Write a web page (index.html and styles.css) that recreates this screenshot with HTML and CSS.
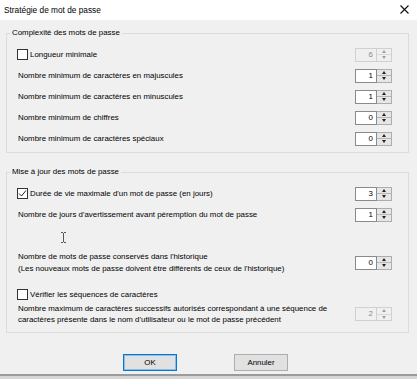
FILE: index.html
```html
<!DOCTYPE html>
<html lang="fr">
<head>
    <meta charset="UTF-8">
    <title>Stratégie de mot de passe</title>
    <link rel="stylesheet" href="styles.css">
</head>
<body>
    <div class="window">
        <div class="titlebar">
            <span class="title">Stratégie de mot de passe</span>
            <svg class="close" width="9" height="9" viewBox="0 0 9 9"><path d="M0.5 0.5 L8.5 8.5 M8.5 0.5 L0.5 8.5" stroke="#111" stroke-width="1.1" fill="none"/></svg>
        </div>

        <div class="content">
            <fieldset class="group">
                <legend>Complexité des mots de passe</legend>
                <div class="row">
                    <label class="check"><span class="box"></span>Longueur minimale</label>
                    <div class="spin disabled"><span class="spin-val">6</span><span class="spin-btns"><span class="up"></span><span class="down"></span></span></div>
                </div>
                <div class="row">
                    <span class="label">Nombre minimum de caractères en majuscules</span>
                    <div class="spin"><span class="spin-val">1</span><span class="spin-btns"><span class="up"></span><span class="down"></span></span></div>
                </div>
                <div class="row">
                    <span class="label">Nombre minimum de caractères en minuscules</span>
                    <div class="spin"><span class="spin-val">1</span><span class="spin-btns"><span class="up"></span><span class="down"></span></span></div>
                </div>
                <div class="row">
                    <span class="label">Nombre minimum de chiffres</span>
                    <div class="spin"><span class="spin-val">0</span><span class="spin-btns"><span class="up"></span><span class="down"></span></span></div>
                </div>
                <div class="row">
                    <span class="label">Nombre minimum de caractères spéciaux</span>
                    <div class="spin"><span class="spin-val">0</span><span class="spin-btns"><span class="up"></span><span class="down"></span></span></div>
                </div>
            </fieldset>

            <fieldset class="group group-update">
                <legend>Mise à jour des mots de passe</legend>
                <div class="row">
                    <label class="check"><span class="box checked"><svg width="9" height="9" viewBox="0 0 9 9"><path d="M1 4.5 L3.5 7 L8 1.5" stroke="#222" stroke-width="1" fill="none"/></svg></span>Durée de vie maximale d'un mot de passe (en jours)</label>
                    <div class="spin"><span class="spin-val">3</span><span class="spin-btns"><span class="up"></span><span class="down"></span></span></div>
                </div>
                <div class="row">
                    <span class="label">Nombre de jours d'avertissement avant péremption du mot de passe</span>
                    <div class="spin"><span class="spin-val">1</span><span class="spin-btns"><span class="up"></span><span class="down"></span></span></div>
                </div>
                <div class="row multi history">
                    <span class="label">Nombre de mots de passe conservés dans l'historique<br>(Les nouveaux mots de passe doivent être différents de ceux de l'historique)</span>
                    <div class="spin"><span class="spin-val">0</span><span class="spin-btns"><span class="up"></span><span class="down"></span></span></div>
                </div>
                <div class="row check-row">
                    <label class="check"><span class="box"></span>Vérifier les séquences de caractères</label>
                </div>
                <div class="row multi">
                    <span class="label">Nombre maximum de caractères successifs autorisés correspondant à une séquence de<br>caractères présente dans le nom d'utilisateur ou le mot de passe précédent</span>
                    <div class="spin disabled"><span class="spin-val">2</span><span class="spin-btns"><span class="up"></span><span class="down"></span></span></div>
                </div>
                <svg class="ibeam" width="5" height="11" viewBox="0 0 5 11"><path d="M0 0.5 H2 M3 0.5 H5 M2.5 1 V10 M0 10.5 H2 M3 10.5 H5" stroke="#555" stroke-width="1" fill="none"/></svg>
            </fieldset>

            <div class="buttons">
                <button class="btn btn-default">OK</button>
                <button class="btn">Annuler</button>
            </div>
        </div>

        <div class="bottom-edge"></div>
    </div>
</body>
</html>
```

FILE: styles.css
```css
* {
    box-sizing: border-box;
}
body {
    margin: 0;
    font-family: "Liberation Sans", Arial, sans-serif;
    font-size: 7.9px;
    color: #000;
    background-color: #f0f0f0;
}
.window {
    width: 417px;
    height: 379px;
    display: flex;
    flex-direction: column;
    background-color: #f0f0f0;
}
.titlebar {
    height: 20px;
    flex-shrink: 0;
    background-color: #fff;
    display: flex;
    align-items: center;
    justify-content: space-between;
    padding: 0 8px 0 4px;
}
.title {
    font-size: 8.3px;
    margin-top: -1px;
}
.close {
    display: block;
    flex-shrink: 0;
    width: 9px;
    height: 9px;
    margin-top: -2px;
}
.content {
    flex: 1;
    padding: 7px 8px 0 6px;
}
.group {
    position: relative;
    margin: 0;
    border: 1px solid #dcdcdc;
    padding: 5px 16px 3px 10px;
    min-width: 0;
}
.group legend {
    margin-left: -7px;
    padding: 0 2px;
    line-height: 12px;
}
.group-update {
    margin-top: 13px;
    padding-bottom: 7px;
}
.row {
    display: flex;
    align-items: center;
    justify-content: space-between;
    height: 21px;
}
.row.multi {
    height: 22px;
    line-height: 11px;
}
.row.history {
    height: 23px;
    line-height: 11.5px;
    margin-top: 26px;
}
.row.check-row {
    height: 17px;
    margin-top: 12px;
}
.label {
    margin-left: 1px;
}
.check {
    display: flex;
    align-items: center;
}
.box {
    width: 11px;
    height: 11px;
    border: 1px solid #333;
    background-color: #fff;
    display: flex;
    align-items: center;
    justify-content: center;
    margin-right: 2px;
}
.spin {
    display: flex;
    width: 37px;
    height: 14px;
    flex-shrink: 0;
}
.spin-val {
    flex: 1;
    background-color: #fff;
    border: 1px solid #8a8a8a;
    text-align: right;
    padding-right: 3px;
    line-height: 12px;
}
.spin-btns {
    width: 15px;
    display: flex;
    flex-direction: column;
    border: 1px solid #adadad;
    border-left: none;
    background-color: #e6e6e6;
}
.up, .down {
    flex: 1;
    display: flex;
    align-items: center;
    justify-content: center;
}
.up {
    border-bottom: 1px solid #b5b5b5;
}
.up::after {
    content: "";
    border-left: 2.5px solid transparent;
    border-right: 2.5px solid transparent;
    border-bottom: 3px solid #222;
}
.down::after {
    content: "";
    border-left: 2.5px solid transparent;
    border-right: 2.5px solid transparent;
    border-top: 3px solid #222;
}
.spin.disabled .spin-val {
    background-color: #f0f0f0;
    border-color: #d0d0d0;
    color: #8c8c8c;
}
.spin.disabled .spin-btns {
    border-color: #d0d0d0;
    background-color: #f0f0f0;
}
.spin.disabled .up {
    border-bottom-color: #dadada;
}
.spin.disabled .up::after {
    border-bottom-color: #a0a0a0;
}
.spin.disabled .down::after {
    border-top-color: #a0a0a0;
}
.ibeam {
    position: absolute;
    left: 54px;
    top: 54px;
}
.buttons {
    display: flex;
    justify-content: center;
    gap: 57px;
    margin-top: 21px;
    padding-right: 4px;
}
.btn {
    width: 54px;
    height: 17px;
    padding: 0;
    font-family: inherit;
    font-size: 7.9px;
    color: #000;
    background-color: #e1e1e1;
    border: 1px solid #adadad;
}
.btn-default {
    border-color: #0078d7;
    box-shadow: inset 0 0 0 1px rgba(0, 120, 215, 0.35);
}
.bottom-edge {
    height: 5px;
    flex-shrink: 0;
    border-top: 2px solid #9b9b9b;
    background-color: #d6d6d6;
}
```
